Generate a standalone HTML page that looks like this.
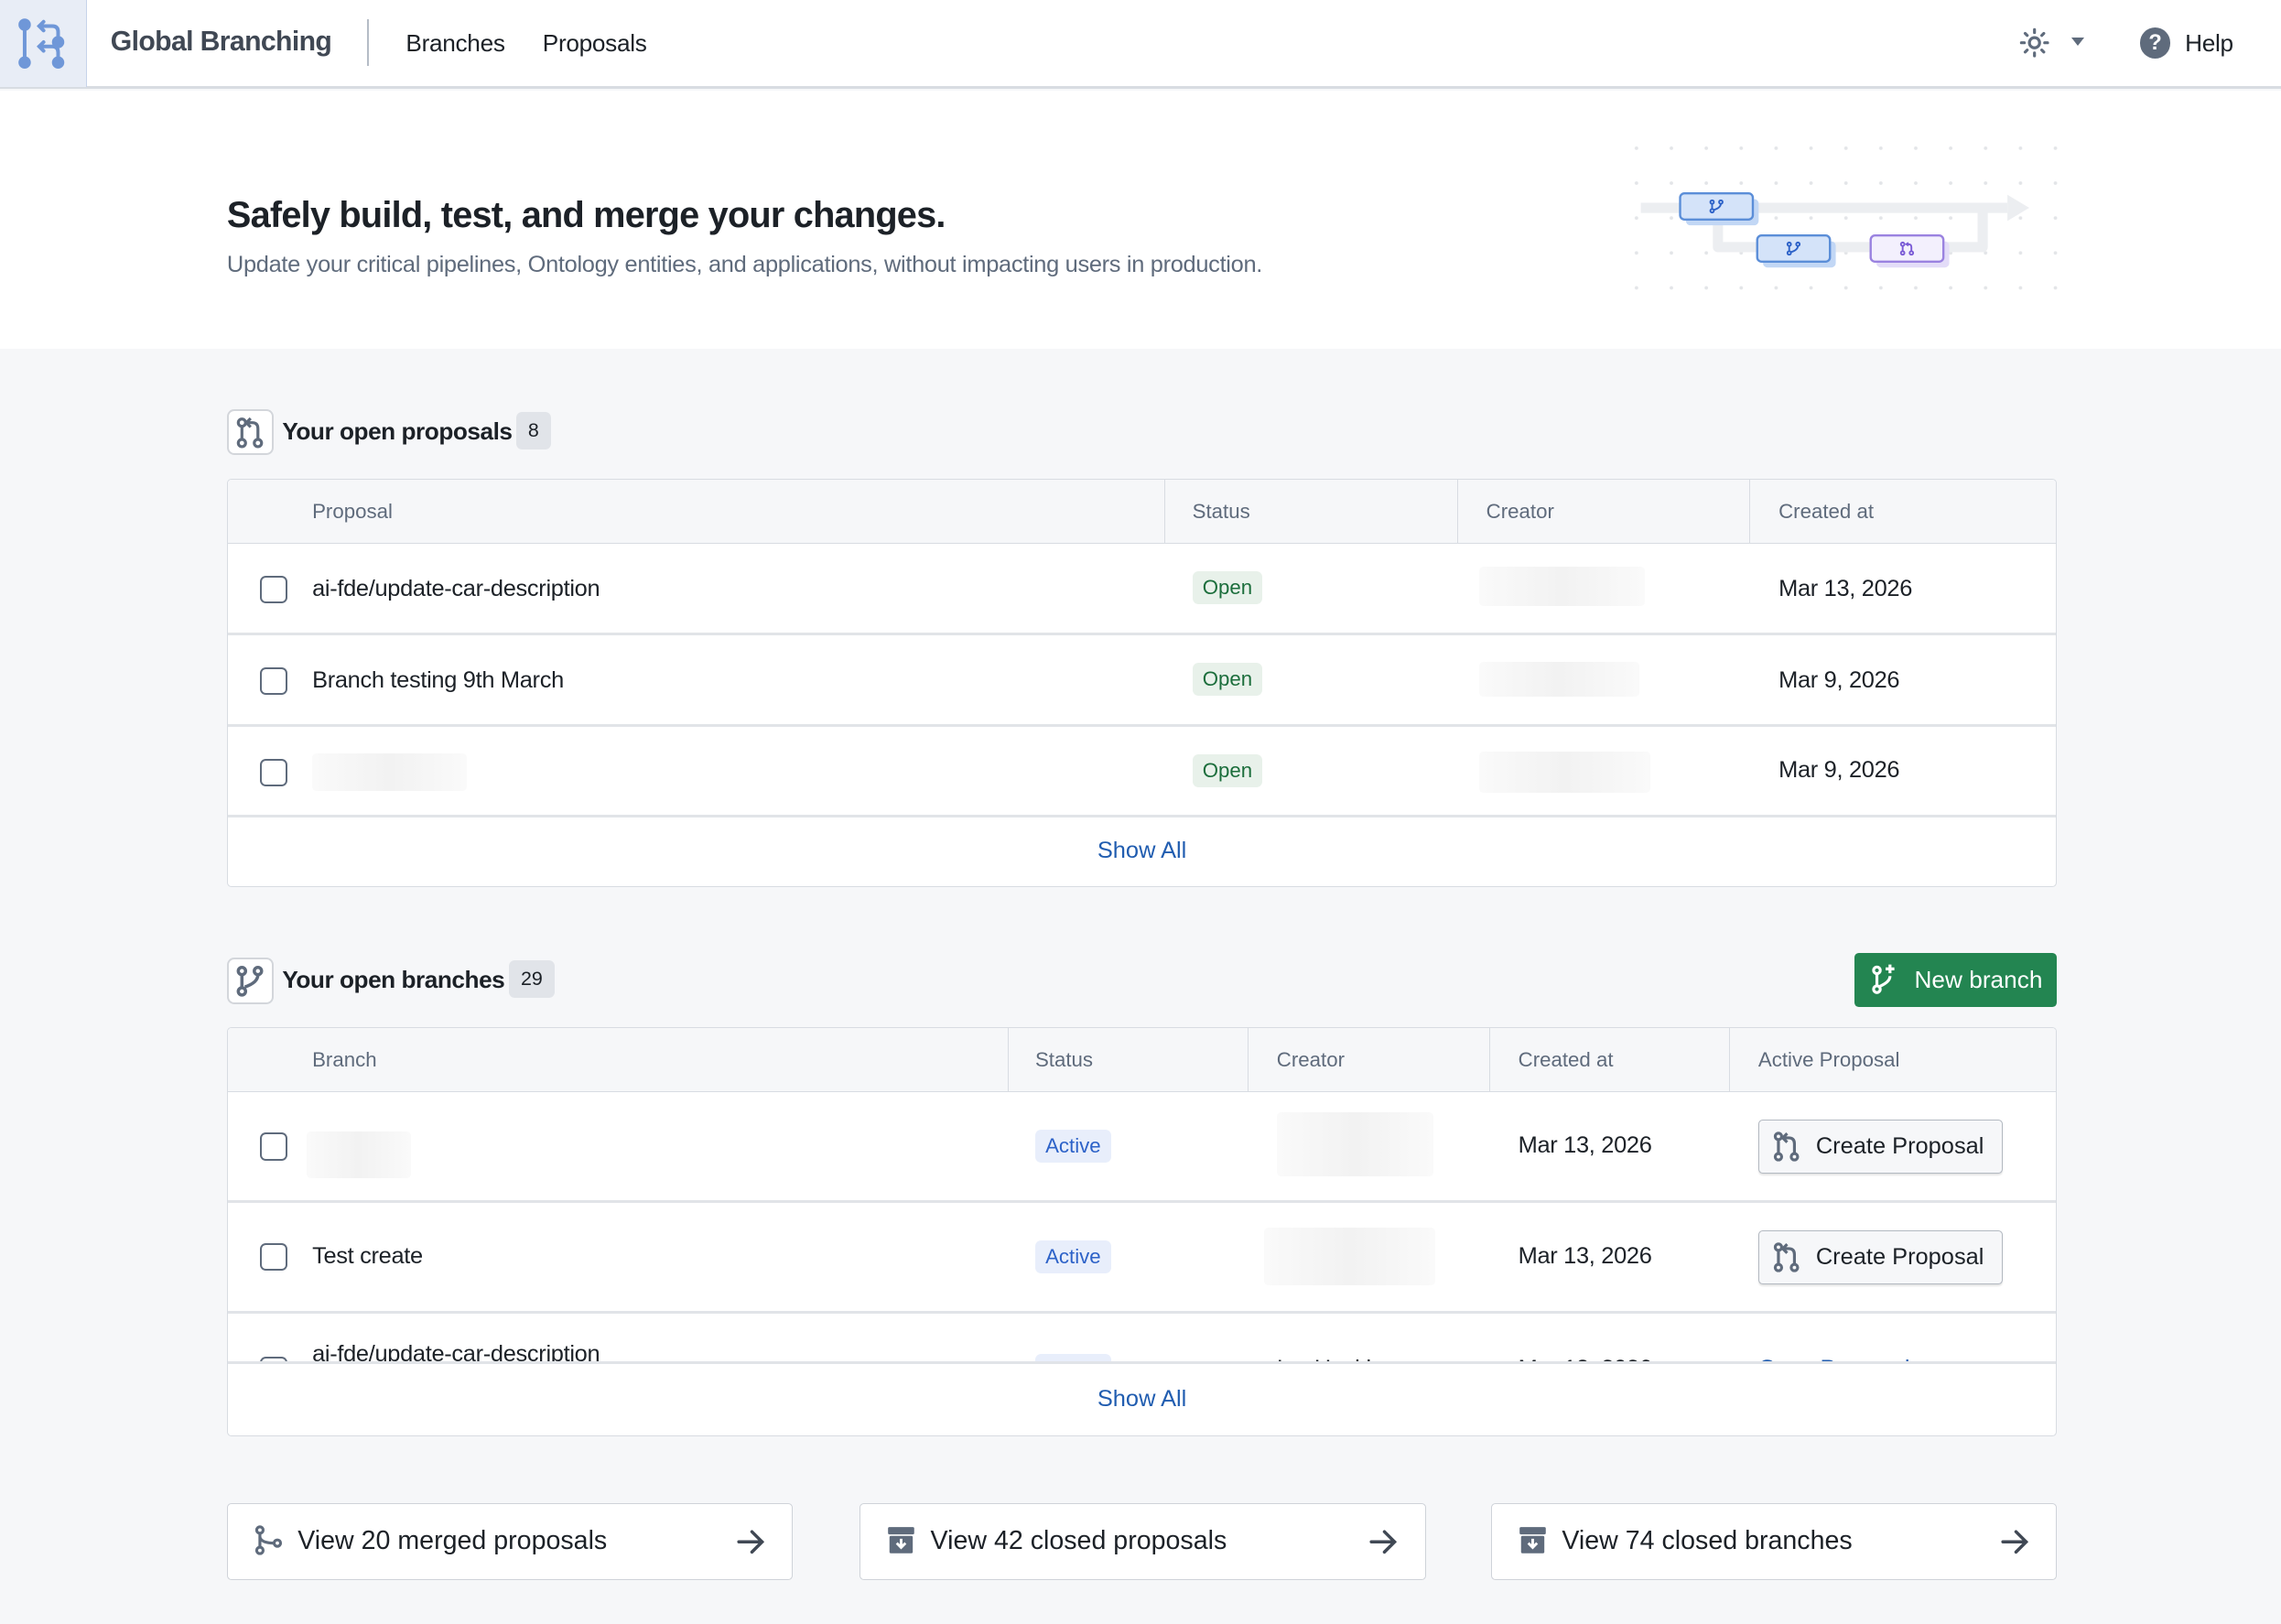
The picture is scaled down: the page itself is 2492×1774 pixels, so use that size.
<!DOCTYPE html>
<html><head><meta charset="utf-8"><style>
*{box-sizing:border-box;margin:0;padding:0}
html,body{width:2492px;height:1774px;overflow:hidden}
body{font-family:"Liberation Sans",sans-serif;background:#f6f7f9;color:#1c2127}
#r{zoom:1.5893;width:1568px;height:1116px;position:relative}
.a{position:absolute}
.nav{left:0;top:0;width:1568px;height:61px;background:#fff;border-bottom:2px solid #d8dce2}
.t{font-size:15.5px;letter-spacing:-0.2px;white-space:nowrap}
.tbl{background:#fff;border:1px solid #d8dce2;border-radius:3px;left:156px;width:1258px;overflow:hidden}
.hr{background:#f6f7f9;border-bottom:1px solid #d8dce2;height:44px}
.cell{position:absolute;font-size:14px;color:#5f6b7c;top:14px}
.vl{position:absolute;top:0;height:44px;border-left:1px solid #d8dce2}
.row{position:absolute;left:0;width:100%;border-bottom:2px solid #e1e4e8}
.cb{position:absolute;left:22px;width:19px;height:19px;border:1.5px solid #5f6b7c;border-radius:4px;background:#fff}
.tag{position:absolute;font-size:14px;padding:3px 7px;border-radius:4px}
.open{background:#e8f1ea;color:#1c6e3c}
.act{background:#e8eefb;color:#2d62c8}
.blur{position:absolute;background:linear-gradient(90deg,#fafafa,#f2f2f2,#fafafa);border-radius:3px}
.sa{position:absolute;left:0;width:100%;text-align:center;color:#215db0;font-size:16px}
.ib{position:absolute;width:32px;height:32px;border:1.5px solid #d3d6db;border-radius:5px;background:#fff}
.badge{position:absolute;background:#e1e4e9;border-radius:4px;font-size:13.5px;padding:5px 8px}
.btn{position:absolute;border:1px solid #b3b9c1;border-radius:3px;background:#f6f7f9;font-size:16px;height:37px;width:168px;box-shadow:0 1px 1px rgba(0,0,0,.1)}
.card{position:absolute;top:1033px;height:53px;width:389px;background:#fff;border:1px solid #cfd3d9;border-radius:3px;font-size:18px}
.arr{position:absolute;left:349px;top:17px}
</style></head><body><div id="r">
<div class="a nav">
 <div class="a" style="left:0;top:0;width:60px;height:60px;background:#e8edf6;border-right:1px solid #c6d3ea">
  <svg class="a" style="left:12px;top:12px" width="36" height="36" viewBox="0 0 36 36" fill="none" stroke="#6f97d8" stroke-width="2.5" stroke-linecap="round">
   <circle cx="5" cy="5" r="3" fill="#6f97d8"/><circle cx="5" cy="31" r="3" fill="#6f97d8"/><line x1="5" y1="5" x2="5" y2="31"/>
   <circle cx="28" cy="17" r="3" fill="#6f97d8"/><circle cx="28" cy="31" r="3" fill="#6f97d8"/>
   <path d="M28 14 V10 Q28 6 24 6 H15 M18 3 L15 6 L18 9"/><path d="M28 28 V24 Q28 20 24 20 H15 M18 17 L15 20 L18 23"/>
  </svg></div>
 <div class="a" style="left:76px;top:18px;font-size:19px;font-weight:bold;color:#404854;letter-spacing:-0.4px">Global Branching</div>
 <div class="a" style="left:252px;top:13px;height:32px;border-left:1.5px solid #b5bcc6"></div>
 <div class="a t" style="left:279px;top:20px;font-size:16.5px">Branches</div>
 <div class="a t" style="left:373px;top:20px;font-size:16.5px">Proposals</div>
 <svg class="a" style="left:1388px;top:19px" width="21" height="21" viewBox="0 0 21 21" stroke="#5f6b7c" stroke-width="2" stroke-linecap="round" fill="none"><circle cx="10.5" cy="10.5" r="3.5"/><path d="M10.5 1.5v2M10.5 17.5v2M1.5 10.5h2M17.5 10.5h2M4.1 4.1l1.4 1.4M15.5 15.5l1.4 1.4M4.1 16.9l1.4-1.4M15.5 5.5l1.4-1.4"/></svg>
 <div class="a" style="left:1424px;top:26px;width:0;height:0;border-left:5px solid transparent;border-right:5px solid transparent;border-top:6px solid #5f6b7c"></div>
 <div class="a" style="left:1471px;top:19px;width:21px;height:21px;border-radius:50%;background:#5f6b7c;color:#fff;font-size:15px;font-weight:bold;text-align:center;line-height:21px">?</div>
 <div class="a t" style="left:1502px;top:20px;font-size:16.5px">Help</div>
</div>
<div class="a" style="left:0;top:62px;width:1568px;height:178px;background:#fff">
 <div class="a" style="left:156px;top:72px;font-size:25px;font-weight:bold;letter-spacing:-0.5px">Safely build, test, and merge your changes.</div>
 <div class="a" style="left:156px;top:111px;font-size:16px;color:#5f6b7c;letter-spacing:-0.2px">Update your critical pipelines, Ontology entities, and applications, without impacting users in production.</div>
 <svg class="a" style="left:1110px;top:30px" width="310" height="120" viewBox="0 0 310 120">
  <defs><pattern id="d" width="24" height="24" patternUnits="userSpaceOnUse"><circle cx="15" cy="10" r="1.2" fill="#e3e5e8"/></pattern></defs>
  <rect width="310" height="120" fill="url(#d)"/>
  <path d="M18 51 H270" stroke="#eceef1" stroke-width="7"/><path d="M270 42 L285 51 L270 60Z" fill="#eceef1"/>
  <path d="M71 55 V78 H253 V51" stroke="#eceef1" stroke-width="7" fill="none" stroke-linejoin="round"/>
  <rect x="49" y="45" width="50" height="18" rx="3" fill="#c2d7f5"/><rect x="45" y="41" width="50" height="18" rx="3" fill="#d4e3f9" stroke="#5b8ed8" stroke-width="1.5"/>
  <rect x="102" y="74" width="50" height="18" rx="3" fill="#c2d7f5"/><rect x="98" y="70" width="50" height="18" rx="3" fill="#d4e3f9" stroke="#5b8ed8" stroke-width="1.5"/>
  <rect x="180" y="74" width="50" height="18" rx="3" fill="#e3dcf8"/><rect x="176" y="70" width="50" height="18" rx="3" fill="#f3f0fd" stroke="#9a82e0" stroke-width="1.5"/>
  <g fill="none" stroke="#2d62c8" stroke-width="1.2"><circle cx="67" cy="47" r="1.2"/><circle cx="67" cy="53" r="1.2"/><circle cx="73" cy="47" r="1.2"/><path d="M67 48v4M73 48q0 3-5 4.5"/>
  <circle cx="120" cy="76" r="1.2"/><circle cx="120" cy="82" r="1.2"/><circle cx="126" cy="76" r="1.2"/><path d="M120 77v4M126 77q0 3-5 4.5"/></g>
  <g fill="none" stroke="#7a5bd6" stroke-width="1.2"><circle cx="198" cy="76" r="1.2"/><circle cx="198" cy="82" r="1.2"/><circle cx="204" cy="82" r="1.2"/><path d="M198 77v4M204 81v-3q0-2-2-2h-1M202 75l-1.5 1 1.5 1"/></g>
 </svg>
</div>

<div class="ib" style="left:156px;top:281px"><svg width="29" height="29" viewBox="0 0 29 29" fill="none" stroke="#5f6b7c" stroke-width="2"><circle cx="9" cy="8" r="2.5"/><circle cx="9" cy="22" r="2.5"/><line x1="9" y1="10.5" x2="9" y2="19.5"/><circle cx="20" cy="22" r="2.5"/><path d="M20 19.5 V12 Q20 8 16 8 H13 M15 5 L12 8 L15 11"/></svg></div>
<div class="a" style="left:194px;top:287px;font-size:16.5px;font-weight:bold;letter-spacing:-0.3px">Your open proposals</div>
<div class="badge" style="left:355px;top:283px">8</div>

<div class="a tbl" style="top:329px;height:281px">
 <div class="hr"><span class="cell" style="left:58px">Proposal</span><div class="vl" style="left:644px"></div><span class="cell" style="left:663px">Status</span><div class="vl" style="left:845px"></div><span class="cell" style="left:865px">Creator</span><div class="vl" style="left:1046px"></div><span class="cell" style="left:1066px">Created at</span></div>
 <div class="row" style="top:44px;height:63px"><div class="cb" style="top:22px"></div><span class="a t" style="left:58px;top:22px;font-size:16px">ai-fde/update-car-description</span><span class="tag open" style="left:663px;top:19px">Open</span><div class="blur" style="left:860px;top:16px;width:114px;height:27px"></div><span class="a t" style="left:1066px;top:22px;font-size:16px">Mar 13, 2026</span></div>
 <div class="row" style="top:107px;height:63px"><div class="cb" style="top:22px"></div><span class="a t" style="left:58px;top:22px;font-size:16px">Branch testing 9th March</span><span class="tag open" style="left:663px;top:19px">Open</span><div class="blur" style="left:860px;top:18px;width:110px;height:24px"></div><span class="a t" style="left:1066px;top:22px;font-size:16px">Mar 9, 2026</span></div>
 <div class="row" style="top:170px;height:62px"><div class="cb" style="top:22px"></div><div class="blur" style="left:58px;top:18px;width:106px;height:26px"></div><span class="tag open" style="left:663px;top:19px">Open</span><div class="blur" style="left:860px;top:17px;width:118px;height:28px"></div><span class="a t" style="left:1066px;top:21px;font-size:16px">Mar 9, 2026</span></div>
 <div class="sa" style="top:246px">Show All</div>
</div>

<div class="ib" style="left:156px;top:658px"><svg width="29" height="29" viewBox="0 0 29 29" fill="none" stroke="#5f6b7c" stroke-width="2.2"><circle cx="9" cy="8" r="2.5"/><circle cx="9" cy="22" r="2.5"/><circle cx="20" cy="8" r="2.5"/><line x1="9" y1="10.5" x2="9" y2="19.5"/><path d="M20 10.5 Q20 16 11 19"/></svg></div>
<div class="a" style="left:194px;top:664px;font-size:16.5px;font-weight:bold;letter-spacing:-0.3px">Your open branches</div>
<div class="badge" style="left:350px;top:660px">29</div>
<div class="a" style="left:1275px;top:655px;width:139px;height:37px;background:#238551;border-radius:3px;color:#fff;font-size:16.5px">
 <svg class="a" style="left:9px;top:7px" width="22" height="22" viewBox="0 0 22 22" fill="none" stroke="#fff" stroke-width="2"><circle cx="6" cy="5" r="2.3"/><circle cx="6" cy="18" r="2.3"/><line x1="6" y1="7.3" x2="6" y2="15.7"/><path d="M15 9 Q15 13 8 16"/><path d="M15 1 V7 M12 4 H18"/></svg>
 <span class="a" style="left:41px;top:9px">New branch</span></div>

<div class="a tbl" style="top:706px;height:281px">
 <div class="hr"><span class="cell" style="left:58px">Branch</span><div class="vl" style="left:536px"></div><span class="cell" style="left:555px">Status</span><div class="vl" style="left:701px"></div><span class="cell" style="left:721px">Creator</span><div class="vl" style="left:867px"></div><span class="cell" style="left:887px">Created at</span><div class="vl" style="left:1032px"></div><span class="cell" style="left:1052px">Active Proposal</span></div>
 <div class="row" style="top:44px;height:76px"><div class="cb" style="top:28px"></div><div class="blur" style="left:54px;top:27px;width:72px;height:32px"></div><span class="tag act" style="left:555px;top:26px">Active</span><div class="blur" style="left:721px;top:14px;width:108px;height:44px"></div><span class="a t" style="left:887px;top:28px;font-size:16px">Mar 13, 2026</span>
  <div class="btn" style="left:1052px;top:19px"><svg class="a" style="left:8px;top:7px" width="22" height="22" viewBox="0 0 22 22" fill="none" stroke="#5f6b7c" stroke-width="2"><circle cx="5" cy="4" r="2.2"/><circle cx="5" cy="18" r="2.2"/><line x1="5" y1="6" x2="5" y2="16"/><circle cx="16" cy="18" r="2.2"/><path d="M16 16 V9 Q16 5 12 5 H9 M11 2 L8 5 L11 8"/></svg><span class="a" style="left:39px;top:9px">Create Proposal</span></div></div>
 <div class="row" style="top:120px;height:76px"><div class="cb" style="top:28px"></div><span class="a t" style="left:58px;top:28px;font-size:16px">Test create</span><span class="tag act" style="left:555px;top:26px">Active</span><div class="blur" style="left:712px;top:17px;width:118px;height:40px"></div><span class="a t" style="left:887px;top:28px;font-size:16px">Mar 13, 2026</span>
  <div class="btn" style="left:1052px;top:19px"><svg class="a" style="left:8px;top:7px" width="22" height="22" viewBox="0 0 22 22" fill="none" stroke="#5f6b7c" stroke-width="2"><circle cx="5" cy="4" r="2.2"/><circle cx="5" cy="18" r="2.2"/><line x1="5" y1="6" x2="5" y2="16"/><circle cx="16" cy="18" r="2.2"/><path d="M16 16 V9 Q16 5 12 5 H9 M11 2 L8 5 L11 8"/></svg><span class="a" style="left:39px;top:9px">Create Proposal</span></div></div>
 <div class="a" style="top:196px;left:0;width:100%;height:35px;overflow:hidden;border-bottom:2px solid #e1e4e8"><div class="cb" style="top:30px"></div><span class="a t" style="left:58px;top:19px;font-size:16px">ai-fde/update-car-description</span><span class="tag act" style="left:555px;top:28px;width:52px;height:20px"></span>
 <span class="a t" style="left:721px;top:29px;font-size:16px;color:#1c2127">Ian Hoskins</span><span class="a t" style="left:887px;top:29px;font-size:16px">Mar 13, 2026</span><span class="a t" style="left:1052px;top:29px;font-size:16px;color:#215db0">Open Proposal</span></div>
 <div class="sa" style="top:246px">Show All</div>
</div>

<div class="card" style="left:156px"><svg class="a" style="left:17px;top:14px" width="22" height="22" viewBox="0 0 22 22" fill="none" stroke="#5f6b7c" stroke-width="2"><circle cx="5" cy="4" r="2.2"/><circle cx="5" cy="18" r="2.2"/><line x1="5" y1="6" x2="5" y2="16"/><circle cx="17" cy="13" r="2.2"/><path d="M5 9 Q6 13 15 13"/></svg><span class="a" style="left:48px;top:15px">View 20 merged proposals</span><svg class="arr" width="20" height="18" viewBox="0 0 20 18" fill="none" stroke="#404854" stroke-width="2.2" stroke-linecap="round"><path d="M2 9h16M11 2l7 7-7 7"/></svg></div>
<div class="card" style="left:591px"><svg class="a" style="left:17px;top:14px" width="22" height="22" viewBox="0 0 22 22"><rect x="2" y="2" width="18" height="5" rx="1" fill="#5f6b7c"/><rect x="3" y="8" width="16" height="12" rx="1" fill="#5f6b7c"/><path d="M11 10 V16 M8 13 L11 16 L14 13" stroke="#fff" stroke-width="1.8" fill="none"/></svg><span class="a" style="left:48px;top:15px">View 42 closed proposals</span><svg class="arr" width="20" height="18" viewBox="0 0 20 18" fill="none" stroke="#404854" stroke-width="2.2" stroke-linecap="round"><path d="M2 9h16M11 2l7 7-7 7"/></svg></div>
<div class="card" style="left:1025px"><svg class="a" style="left:17px;top:14px" width="22" height="22" viewBox="0 0 22 22"><rect x="2" y="2" width="18" height="5" rx="1" fill="#5f6b7c"/><rect x="3" y="8" width="16" height="12" rx="1" fill="#5f6b7c"/><path d="M11 10 V16 M8 13 L11 16 L14 13" stroke="#fff" stroke-width="1.8" fill="none"/></svg><span class="a" style="left:48px;top:15px">View 74 closed branches</span><svg class="arr" width="20" height="18" viewBox="0 0 20 18" fill="none" stroke="#404854" stroke-width="2.2" stroke-linecap="round"><path d="M2 9h16M11 2l7 7-7 7"/></svg></div>
</div></body></html>
